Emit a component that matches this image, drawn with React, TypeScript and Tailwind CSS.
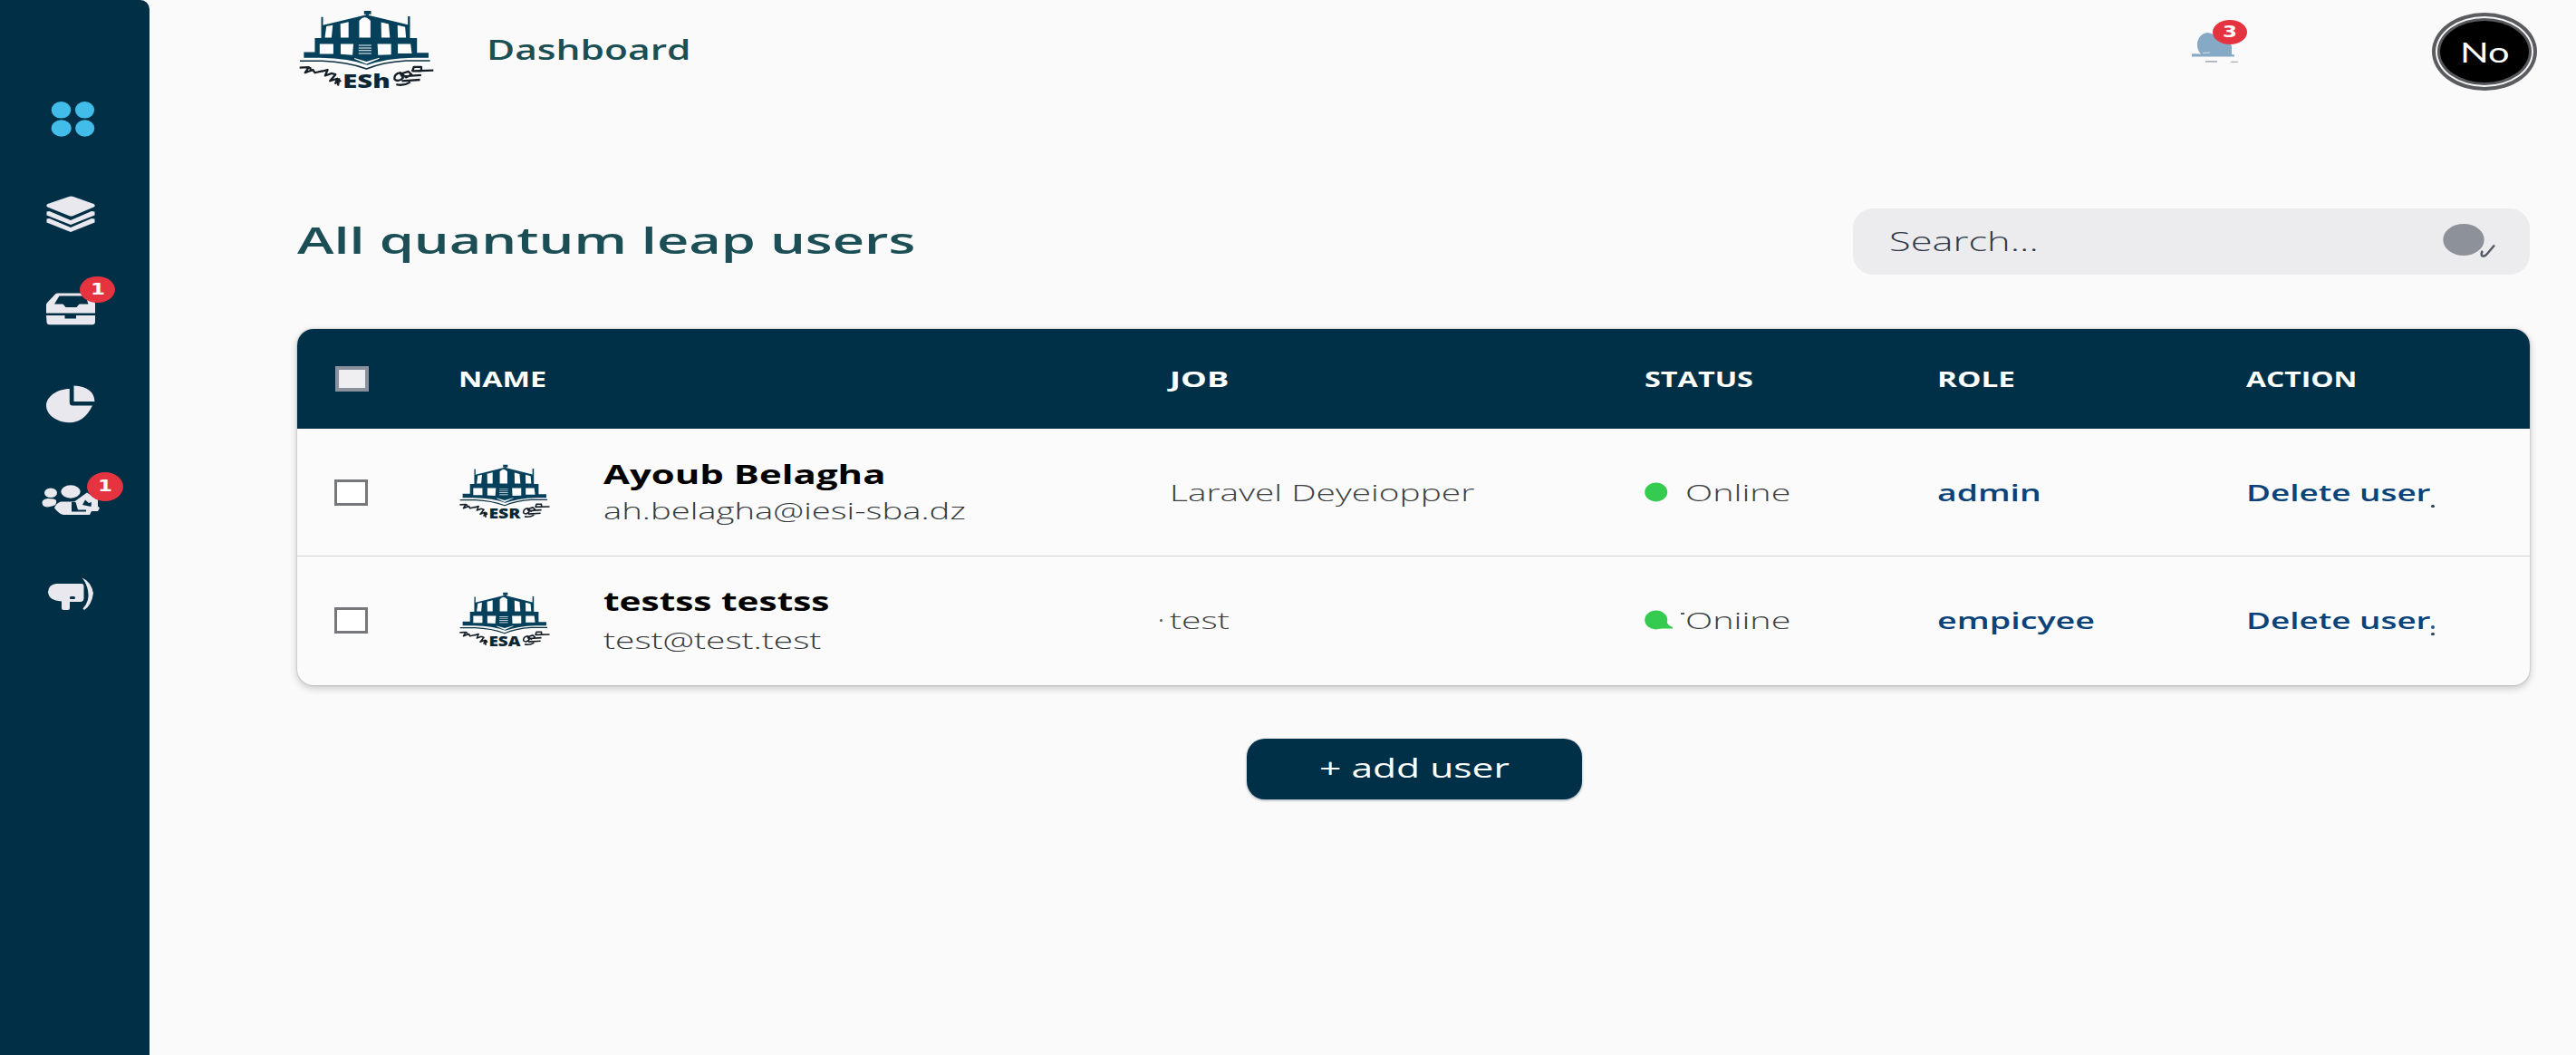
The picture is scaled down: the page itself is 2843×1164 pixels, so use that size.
import { useLayoutEffect, useRef, type ReactNode } from "react";

/* One line of text, stretched horizontally to fill the width of its box. */
function Fit({ children, className }: { children: ReactNode; className: string }) {
  const box = useRef<HTMLSpanElement>(null);
  const ink = useRef<HTMLSpanElement>(null);
  useLayoutEffect(() => {
    const apply = () => {
      if (!box.current || !ink.current) return;
      ink.current.style.transform = `scaleX(${box.current.clientWidth / ink.current.offsetWidth})`;
    };
    apply();
    document.fonts.ready.then(apply);
  }, []);
  return (
    <span ref={box} className={`block whitespace-nowrap ${className}`}>
      <span ref={ink} className="inline-block origin-left">
        {children}
      </span>
    </span>
  );
}

function Logo({ className, label }: { className: string; label: string }) {
  return (
    <svg className={`overflow-visible ${className}`} viewBox="90 30 444 272" preserveAspectRatio="none" fill="#07405a">
      <path d="M304 33h23v12h-8v6h-8v-6h-7z" />
      <path d="M163 54h6v28l143-36 136 34V52h7v74h23v50h38v17h-51q-90 2-150 25q-60-24-155-25h-54v-19h36v-48h21z" />
      <g fill="#fdfdfd">
        <path d="M169 58h136l-136 24zM454 58h-136l130 22z" fill="none" />
        <path d="M180 86l21-4-4 42h-22zM226 77l27-6v53h-26zM288 124V66q18-22 37 0v58zM360 72l25 6 4 46h-28zM414 82l25 6 3 36h-27z" />
        <path d="M158 146h45v34h-45zM227 146h42l-3 38-39-3zM348 146h45v36l-43 2zM415 146h42l4 32h-46z" />
        <path d="M286 149h42v3h-42zM286 158h42v3h-42zM286 167h42v3h-42zM286 177h42v3h-42z" />
        <path d="M272 194l40 12 42-13v3l-42 18-40-17z" />
      </g>
      <path d="M93 204h74q82 3 145 27q52-23 130-28h79" fill="none" stroke="#0d2f42" strokeWidth="5" />
      <g fill="none" stroke="#161f27" strokeWidth="7" strokeLinejoin="round">
        <path d="M92 227l30-2-12 19 26-10 6 10 24-6M126 225l4 15M164 240l20-6-8 20 22-8M196 246l14 4-18 22 24-8-6 16 18-10M222 262l-4 26" />
        <path d="M424 244q-22 4-20 22q12 12 28-4l-8-14 26-8 10 10-18 10zM462 240l6-16h24v14h-28l68-2M434 256l58-4M428 272l60-4M410 284q24 6 46-8" />
      </g>
      <text x="234" y="295" textLength="156" lengthAdjust="spacingAndGlyphs" fontSize="67" fontWeight="800" fontFamily="Open Sans, sans-serif" fill="#0b2733">
        {label}
      </text>
    </svg>
  );
}

function Badge({ className, children }: { className: string; children: ReactNode }) {
  return (
    <span className={`absolute flex items-center justify-center rounded-[50%] bg-[#e5343f] font-['DejaVu_Sans'] font-bold text-white ${className}`}>
      <span className="scale-x-[1.35]">{children}</span>
    </span>
  );
}

function Sidebar() {
  const item = "relative h-[105px] shrink-0";
  const icon = "block h-[105px] w-[165px]";
  return (
    <aside className="flex w-[165px] shrink-0 flex-col rounded-tr-[10px] bg-[#002f46] pt-[78px]">
      <div className={item}>
        <svg className={icon} viewBox="0 78 165 105" fill="#42bce9">
          <ellipse cx="67.5" cy="121.3" rx="10.8" ry="9.3" />
          <ellipse cx="93.5" cy="121.3" rx="10.6" ry="9.3" />
          <ellipse cx="67.7" cy="141.5" rx="11" ry="9.2" />
          <ellipse cx="93.7" cy="141.5" rx="10.6" ry="9.2" />
        </svg>
      </div>
      <div className={item}>
        <svg className={icon} viewBox="0 183 165 105" fill="#e8e8ee">
          <path d="M76 217q2.500-1 5 0l22.500 8q2.500 2 0 3.500l-22.500 9.500q-2.500 1-5 0l-23.500-9.500q-2.500-1.500 0-3.500z" />
          <path d="M51.500 233.500l3-.5 23.500 10 23-10 3.500.5v4l-26.500 10.500-26.500-10.500zM51.500 241.500l3-.5 23.500 10 23-10 3.500.5v4l-26.500 10.500-26.500-10.500z" />
        </svg>
      </div>
      <div className={item}>
        <svg className={icon} viewBox="0 288 165 105" fill="#e8e8ee">
          <path fillRule="evenodd" d="M64 323.500h28q12 0 13 12v10h-54v-9q0-1.500 1-2.500l9-9.500q1-1 3-1zM65.500 326.500l-5.500 9h9.500l3 3.500h12l3-3.500h10l-3-9z" />
          <path d="M51 348h20.500v3.500h12.500v-3.500h21v7q0 3.200-3.500 3.200h-46.500q-3.500 0-3.500-3.200z" />
        </svg>
        <Badge className="left-[88px] top-[17px] h-[29px] w-[39px] text-[17px]">1</Badge>
      </div>
      <div className={item}>
        <svg className={icon} viewBox="0 393 165 105" fill="#e8e8ee">
          <path d="M76.800 429v15q0 3.500 3.500 3.500h21.700q-9 18.700-25.500 18.700c-14 0-25.500-9-25.500-18.700s12-18.500 25.800-18.500z" />
          <path d="M81.500 425.500q22 1 23 17.500h-23z" />
        </svg>
      </div>
      <div className={item}>
        <svg className={icon} viewBox="0 498 165 105" fill="#e8e8ee">
          <ellipse cx="56" cy="543.800" rx="7" ry="5.300" />
          <path d="M53 550q8 0 9 2 1 5-3 6-12 4-12.500-3.500 0-4 6.500-4.500z" />
          <ellipse cx="78" cy="542.500" rx="10.700" ry="7.200" />
          <path d="M67 553.500h15l14-10 12 8v7l2 2-2 3.500h-7l-2 4h-29q-5-1-10-7.500 1.500-5 7-7z" />
          <path d="M79 554v10.500h16v-2h-9l-2.500-8.500zM91 557l3-5.500 4 3.500 3-1-.5 5z" fill="#002f46" />
        </svg>
        <Badge className="left-[96px] top-[23px] h-[32px] w-[40px] text-[17px]">1</Badge>
      </div>
      <div className={item}>
        <svg className={icon} viewBox="0 603 165 105" fill="#e8e8ee">
          <path fillRule="evenodd" d="M62 644h28q2.500 0 2.500 3v13q0 4-4 4h-11.500v7q0 2-2 2h-5q-2 0-2-2v-7.500q-14.500-1-15-10.500.5-8 9-9zM78 658q-1 0-1 1.500t1 1.500h3.500q1.500 0 1.500-1.500t-1.500-1.500z" />
          <path d="M90.500 637.500q10 4 12.500 17-2 13.500-10 18.500l-1.500-1.500q8-9 5.500-20-1.500-8-6.500-14z" />
        </svg>
      </div>
    </aside>
  );
}

function Header() {
  return (
    <header className="flex h-[110px] items-start pl-[165px] pr-[43px] pt-[11px]">
      <Logo className="h-[88px] w-[149px]" label="ESh" />
      <Fit className="ml-[58px] mt-[20px] w-[225px] text-[31px] font-semibold leading-[46px] text-[#1a4f54]">Dashboard</Fit>
      <div className="relative ml-auto mt-[11px] h-[60px] w-[66px]">
        <svg className="h-[60px] w-[66px]" viewBox="2417 22 66 60" fill="#86a9c6">
          <path d="M2429 59.500c-8-9-3-23.500 8-23.500l10 3q14 5 16 12v9l3 .5v2h-47v-3.300z" />
          <path d="M2434 67h13v1.800h-13zM2462 67.700h8v1.200h-8z" fill="#a9b3bc" />
          <path d="M2431 58.500l8-.5" stroke="#d5e2ec" />
        </svg>
        <Badge className="left-[25px] top-0 h-[27px] w-[38px] text-[17px]">3</Badge>
      </div>
      <div className="ml-[201px] mt-[3px] flex h-[86px] w-[116px] items-center justify-center rounded-[50%] border-[4px] border-[#5a5c5f] bg-[#f6f6f6] p-[2px]">
        <div className="flex h-full w-full items-center justify-center rounded-[50%] border-[3px] border-[#55575a] bg-black">
          <Fit className="w-[55px] font-[Lato] text-[31px] leading-[40px] text-white">No</Fit>
        </div>
      </div>
    </header>
  );
}

function Checkbox({ header = false }: { header?: boolean }) {
  return (
    <span
      className={
        header
          ? "ml-[42px] h-[28px] w-[37px] border-4 border-[#8b909d] bg-[#efeff1]"
          : "ml-[41px] h-[29px] w-[37px] border-[3px] border-[#76777a] bg-white"
      }
    />
  );
}

const columns = "grid grid-cols-[179px_784px_524px_325px_340px_1fr] items-center";

const users = [
  {
    name: "Ayoub Belagha",
    nameClass: "w-[311px]",
    email: "ah.belagha@iesi-sba.dz",
    emailClass: "w-[400px]",
    gap: "",
    rowClass: "h-[140px]",
    logo: "ESR",
    job: "Laravel Deyeiopper",
    jobClass: "w-[336px]",
    speck: false,
    status: "Online",
    role: "admin",
    roleClass: "w-[115px]",
  },
  {
    name: "testss testss",
    nameClass: "w-[250px]",
    email: "test@test.test",
    emailClass: "w-[241px]",
    gap: "gap-[3px]",
    rowClass: "h-[143px] border-t border-[#d0d4d6] pb-[2px]",
    logo: "ESA",
    job: "test",
    jobClass: "w-[66px]",
    speck: true,
    status: "Oniine",
    role: "empicyee",
    roleClass: "w-[174px]",
  },
];

function UserTable() {
  const th = "text-[24px] font-bold leading-[34px] text-white";
  const td = "text-[26px] font-[350] leading-[38px] text-[#3b3f42]";
  const link = "text-[26px] font-semibold leading-[38px] text-[#0b4379]";
  return (
    <section className="mt-[59px] w-[2464px] overflow-hidden rounded-[18px] bg-[#fbfbfb] shadow-[0_3px_9px_rgba(0,0,0,0.22),0_0_2px_rgba(0,0,0,0.3)]">
      <div className={`${columns} h-[110px] bg-[#003047]`}>
        <Checkbox header />
        <Fit className={`-ml-px w-[97px] ${th}`}>NAME</Fit>
        <Fit className={`w-[65px] ${th}`}>JOB</Fit>
        <Fit className={`w-[120px] ${th}`}>STATUS</Fit>
        <Fit className={`-ml-[2px] w-[86px] ${th}`}>ROLE</Fit>
        <Fit className={`-ml-px w-[122px] ${th}`}>ACTION</Fit>
      </div>
      {users.map((u) => (
        <div key={u.name} className={`${columns} ${u.rowClass}`}>
          <Checkbox />
          <div className="flex items-center">
            <Logo className="h-[62px] w-[100px]" label={u.logo} />
            <div className={`ml-[59px] flex flex-col ${u.gap}`}>
              <Fit className={`text-[29px] font-bold leading-[40px] text-black ${u.nameClass}`}>{u.name}</Fit>
              <Fit className={`text-[26px] font-[330] leading-[40px] text-[#34383c] ${u.emailClass}`}>{u.email}</Fit>
            </div>
          </div>
          <div className="relative">
            {u.speck && <span className="absolute -left-[11px] top-[18px] size-[3px] rounded-full bg-[#55595c]" />}
            <Fit className={`${td} ${u.jobClass}`}>{u.job}</Fit>
          </div>
          <div className="relative flex items-center">
            <svg className="h-[22px] w-[32px]" viewBox="0 0 32 22" fill="#35cb50">
              <ellipse cx="12.700" cy="11" rx="12.500" ry="10.400" />
              {u.speck && <path d="M24 12q1 5 7 7v1.500H15z" />}
            </svg>
            {u.speck && <span className="absolute left-[40px] top-[11px] h-[2px] w-[4px] bg-[#55595c]" />}
            <Fit className={`ml-[13px] w-[117px] ${td}`}>{u.status}</Fit>
          </div>
          <Fit className={`-ml-[2px] ${link} ${u.roleClass}`}>{u.role}</Fit>
          <div className="relative">
            <Fit className={`-ml-px w-[204px] ${link}`}>Delete user</Fit>
            {u.speck && <span className="absolute left-[203px] top-[25px] h-[4px] w-[4px] rounded-full bg-[#27578a]" />}
            <span className="absolute left-[203px] top-[33px] h-[3px] w-[4px] rounded-full bg-[#2c4257]" />
          </div>
        </div>
      ))}
    </section>
  );
}

export default function App() {
  return (
    <div className="flex h-[1164px] w-[2843px] overflow-hidden bg-[#fafafa] font-['Open_Sans',sans-serif]">
      <Sidebar />
      <main className="min-w-0 flex-1">
        <Header />
        <div className="pl-[163px] pr-[51px] pt-[120px]">
          <div className="flex h-[74px] items-start justify-between">
            <Fit className="mt-[5px] w-[682px] text-[40px] font-semibold leading-[60px] text-[#1c4f55]">All quantum leap users</Fit>
            <div className="flex h-[73px] w-[747px] items-center justify-between rounded-[22px] bg-[#ececee] pb-[2px] pl-[40px] pr-[36px]">
              <Fit className="w-[165px] text-[30px] font-[350] leading-[44px] text-[#303947]">Search...</Fit>
              <svg className="h-[40px] w-[62px]" viewBox="2695 246 62 40">
                <ellipse cx="2720" cy="264.500" rx="22.700" ry="17.500" fill="#8d9199" />
                <path d="M2741 277q-2 2-1 5 3 2 6-2l8-9.500" fill="none" stroke="#565d69" strokeWidth="2.500" />
              </svg>
            </div>
          </div>
          <UserTable />
          <button className="ml-[1048px] mt-[59px] flex h-[67px] w-[370px] items-center justify-center rounded-[20px] bg-[#003047] pb-[3px] shadow-[0_1px_3px_rgba(0,40,70,0.4)]">
            <Fit className="w-[210px] text-left text-[30px] leading-[44px] text-white">+ add user</Fit>
          </button>
        </div>
      </main>
    </div>
  );
}
